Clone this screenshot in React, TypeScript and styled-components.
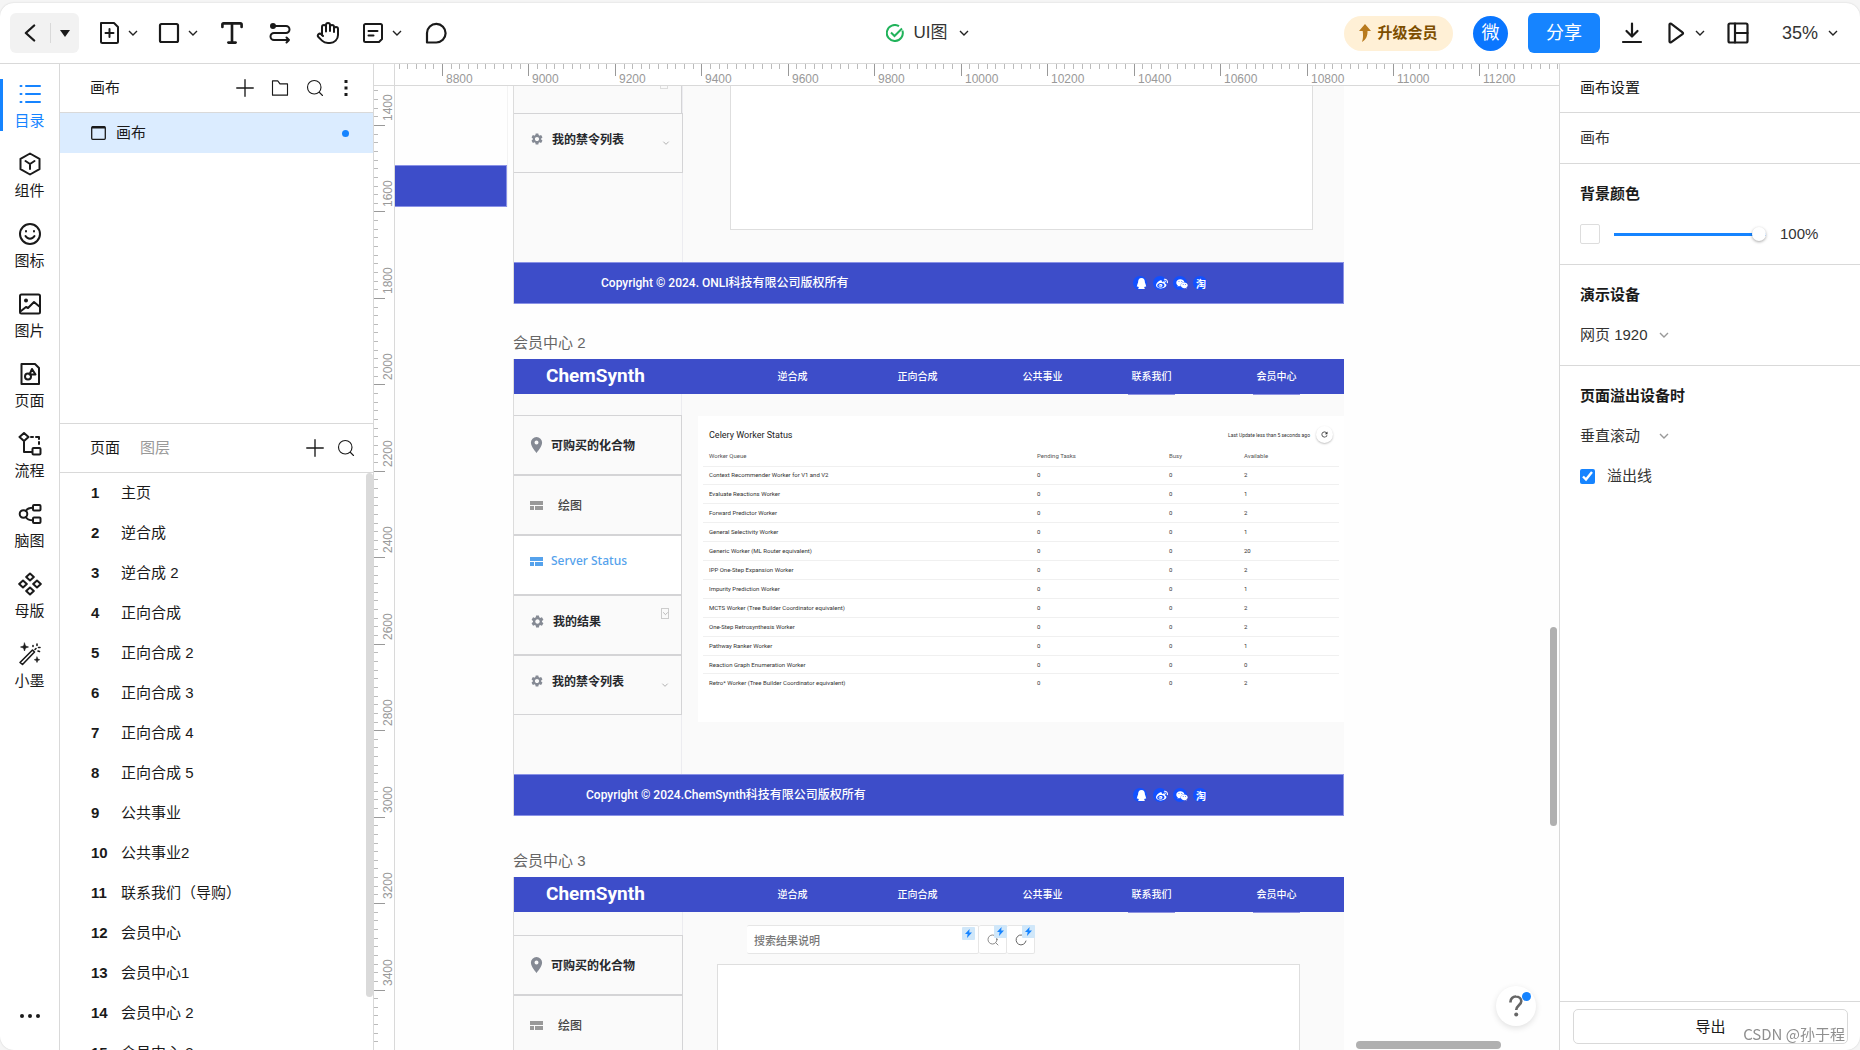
import React from 'react';
import styled, { createGlobalStyle, css } from 'styled-components';
import { Hand, Type } from 'lucide-react';
import { FaQq, FaWeibo, FaWeixin } from 'react-icons/fa';
import { MdSettings, MdRefresh } from 'react-icons/md';

const SANS = '"Liberation Sans", "Noto Sans CJK SC", sans-serif';
const BOARD_FONT = 'Roboto, "Noto Sans CJK SC", sans-serif';
const LINE = '#d9d9d9';
const INK = '#1a1a1a';
const BLUE = '#1684ff';
const INDIGO = '#3d4dc9';

const GlobalStyle = createGlobalStyle`
  * { box-sizing: border-box; }
  body { margin: 0; background: #f5f5f5; color: ${INK}; font: 15px/20px ${SANS}; overflow: hidden; }
  button, input, select { font: inherit; color: inherit; }
  button { padding: 0; border: 0; background: none; cursor: pointer; }
  svg { display: block; flex: none; }
`;

/* ---------- shell ---------- */

const Page = styled.div`
  height: 100vh;
  padding-top: 3px;
  display: flex;
`;
const Shell = styled.div`
  flex: 1;
  min-width: 0;
  display: flex;
  flex-direction: column;
  background: #fff;
  border-radius: 14px;
  overflow: hidden;
  box-shadow: 0 0 2px rgba(0, 0, 0, 0.16);
`;
const Workspace = styled.div`
  flex: 1;
  min-height: 0;
  display: flex;
`;

/* ---------- toolbar ---------- */

const Toolbar = styled.header`
  flex: none;
  height: 61px;
  padding: 0 21px 0 10px;
  display: grid;
  grid-template-columns: 1fr auto 1fr;
  align-items: center;
  border-bottom: 1px solid ${LINE};
`;
const ToolGroup = styled.div<{ $end?: boolean }>`
  display: flex;
  align-items: center;
  gap: ${(p) => (p.$end ? 20 : 18)}px;
  justify-content: ${(p) => (p.$end ? 'flex-end' : 'flex-start')};
`;
const BackBox = styled.div`
  display: flex;
  align-items: center;
  width: 69px;
  height: 40px;
  border-radius: 6px;
  background: #f2f2f2;
`;
const BackButton = styled.button`
  width: 41px;
  height: 20px;
  display: grid;
  place-items: center;
  border-right: 1px solid ${LINE};
`;
const MoreButton = styled.button`
  flex: 1;
  height: 20px;
  display: grid;
  place-items: center;
`;
const Tool = styled.button<{ $plain?: boolean }>`
  display: flex;
  align-items: center;
  gap: 6px;
  height: 40px;
  padding: 0 ${(p) => (p.$plain ? 3 : 0)}px;
`;
const TitleButton = styled.button`
  display: flex;
  align-items: center;
  gap: 10px;
  padding-left: 6px;
  font-size: 17px;
  color: #333;
`;
const UpgradeButton = styled.button`
  display: flex;
  align-items: center;
  justify-content: center;
  gap: 6px;
  width: 109px;
  height: 35px;
  border-radius: 18px;
  background: #fff0d6;
  color: #7d4e00;
  font-weight: 700;
`;
const Avatar = styled.button`
  width: 35px;
  height: 35px;
  border-radius: 50%;
  background: #0a76ff;
  color: #fff;
  font-size: 18px;
`;
const ShareButton = styled.button`
  width: 72px;
  height: 40px;
  border-radius: 6px;
  background: ${BLUE};
  color: #fff;
  font-size: 18px;
`;

/* ---------- selects ---------- */

const SelectWrap = styled.span<{ $gap?: number }>`
  display: inline-flex;
  align-items: center;
  gap: ${(p) => p.$gap ?? 10}px;
`;
const Select = styled.select<{ $size?: number }>`
  appearance: none;
  field-sizing: content;
  border: 0;
  padding: 0;
  background: none;
  font-size: ${(p) => p.$size ?? 15}px;
  line-height: 20px;
  color: #333;
`;
const ZoomSlot = styled.span`
  padding-left: 12px;
`;

/* ---------- left rail ---------- */

const Rail = styled.nav`
  flex: none;
  width: 60px;
  padding: 15px 0 20px;
  display: flex;
  flex-direction: column;
  border-right: 1px solid ${LINE};
`;
const RailButton = styled.button<{ $active?: boolean }>`
  flex: none;
  height: 52px;
  margin-bottom: 18px;
  display: flex;
  flex-direction: column;
  align-items: center;
  justify-content: space-between;
  padding-top: 3px;
  border-left: 3px solid ${(p) => (p.$active ? BLUE : 'transparent')};
  border-right: 3px solid transparent;
  color: ${(p) => (p.$active ? BLUE : INK)};
`;
const RailMore = styled.button`
  margin-top: auto;
  height: 28px;
  display: grid;
  place-items: center;
`;

/* ---------- left panel ---------- */

const LeftPanel = styled.aside`
  flex: none;
  width: 314px;
  display: flex;
  flex-direction: column;
  border-right: 1px solid ${LINE};
`;
const PanelHead = styled.div<{ $ruled?: boolean }>`
  flex: none;
  height: 49px;
  padding: 0 18px 0 30px;
  display: flex;
  align-items: center;
  gap: 20px;
  border-bottom: 1px solid ${LINE};
  ${(p) => p.$ruled && css`border-top: 1px solid ${LINE}; height: 50px;`}
`;
const HeadTools = styled.div<{ $menu?: boolean }>`
  margin-left: auto;
  display: flex;
  gap: ${(p) => (p.$menu ? 17 : 13)}px;
  button { width: 18px; height: 20px; display: grid; place-items: center; }
  ${(p) => p.$menu && css`button:last-child { width: 10px; margin-right: 4px; }`}
`;
const Tab = styled.button<{ $muted?: boolean }>`
  color: ${(p) => (p.$muted ? '#999' : INK)};
`;
const CanvasRow = styled.button`
  flex: none;
  height: 40px;
  padding: 0 24px 0 31px;
  display: flex;
  align-items: center;
  gap: 10px;
  background: #dbecff;
`;
const Dot = styled.i`
  margin-left: auto;
  width: 7px;
  height: 7px;
  border-radius: 50%;
  background: ${BLUE};
`;
const CanvasList = styled.div`
  flex: none;
  height: 359px;
  display: flex;
  flex-direction: column;
`;
const PageArea = styled.div`
  flex: 1;
  min-height: 0;
  display: flex;
  overflow: hidden;
`;
const PageList = styled.ol`
  flex: 1;
  margin: 0;
  padding: 0;
  list-style: none;
`;
const PageItem = styled.li`
  height: 40px;
  padding-left: 31px;
  display: flex;
  align-items: center;
  b { width: 30px; }
`;
const ListThumb = styled.div`
  width: 7px;
  height: 524px;
  border-radius: 4px;
  background: #dadada;
`;

/* ---------- canvas ---------- */

const Stage = styled.main`
  flex: 1;
  min-width: 0;
  display: grid;
  grid-template: 22px minmax(0, 1fr) / 21px minmax(0, 1fr);
`;
const Ruler = styled.div<{ $side?: boolean }>`
  overflow: hidden;
  background: #fff;
  border-bottom: ${(p) => (p.$side ? 0 : 1)}px solid ${LINE};
  border-right: ${(p) => (p.$side ? 1 : 0)}px solid ${LINE};
  svg { width: 100%; height: 100%; }
  text { font: 12px ${SANS}; fill: #999; }
`;
const Corner = styled.div`
  border-right: 1px solid ${LINE};
  border-bottom: 1px solid ${LINE};
`;
const Viewport = styled.div`
  position: relative;
  overflow: hidden;
  background: #fefefe;
`;
const Board = styled.section<{ $x: number; $y: number; $w?: number }>`
  position: absolute;
  left: ${(p) => p.$x}px;
  top: ${(p) => p.$y}px;
  width: ${(p) => p.$w ?? 831}px;
  font-family: ${BOARD_FONT};
`;
const BoardName = styled.h2`
  margin: 0 0 5px;
  font: 400 15px/22px ${SANS};
  color: #666;
`;
const Frame = styled.div<{ $h: number }>`
  height: ${(p) => p.$h}px;
  display: flex;
  flex-direction: column;
  background: #fafafa;
  border-left: 1px solid #dcdcdc;
`;
const EdgeFrame = styled.div`
  height: 121px;
  display: flex;
  flex-direction: column;
  justify-content: flex-end;
  border-right: 1px solid #f3f3f3;
`;
const BoardBody = styled.div`
  flex: 1;
  min-height: 0;
  display: flex;
`;
const BoardHeader = styled.div`
  flex: none;
  height: 35px;
  display: grid;
  grid-template-columns: 255px 125px 125px 109px 125px 1fr;
  background: ${INDIGO};
  color: #fff;
`;
const Brand = styled.strong`
  padding-left: 32px;
  font-size: 19px;
  line-height: 34px;
`;
const NavLink = styled.a<{ $line?: boolean }>`
  width: 47px;
  height: 36px;
  text-align: center;
  font-size: 10px;
  line-height: 35px;
  font-weight: 500;
  color: #fff;
  text-decoration: none;
  border-bottom: 1px solid ${(p) => (p.$line ? '#8e93e0' : 'transparent')};
`;
const FooterBar = styled.div`
  flex: none;
  height: 42px;
  background: ${INDIGO};
  border: 1px solid #8a92e6;
  border-left-width: 0;
`;
const BoardFooter = styled(FooterBar)<{ $indent: number }>`
  padding: 0 136px 0 ${(p) => p.$indent}px;
  display: flex;
  align-items: center;
  justify-content: space-between;
  color: #fff;
  font-size: 12px;
  font-weight: 500;
`;
const Socials = styled.div`
  display: flex;
  gap: 6px;
`;
const Social = styled.span`
  width: 14px;
  height: 14px;
  padding: 2px 0 0 3px;
  border-radius: 50%;
  background: #1150ff;
  font-size: 10px;
  line-height: 13px;
  font-weight: 700;
`;
const Side = styled.div<{ $top: number; $w: number }>`
  flex: none;
  width: ${(p) => p.$w}px;
  padding-top: ${(p) => p.$top}px;
  border-right: 1px solid #ececf0;
`;
const SideItem = styled.div<{ $active?: boolean; $raised?: boolean; $gap?: number }>`
  height: 60px;
  margin-right: -1px;
  padding: 0 12px ${(p) => (p.$raised ? 8 : 0)}px 16px;
  display: flex;
  align-items: center;
  gap: ${(p) => p.$gap ?? 8}px;
  border: solid #d4d4d6;
  border-width: 1px 1px 1px 0;
  background: ${(p) => (p.$active ? '#fff' : '#fafafa')};
  font-size: 12px;
  font-weight: ${(p) => (p.$active || p.$gap ? 500 : 700)};
  font-family: ${(p) => (p.$active ? '"Noto Sans"' : '"Noto Sans CJK SC"')}, sans-serif;
  color: ${(p) => (p.$active ? '#55a2ec' : p.$gap ? '#444' : '#26282c')};
  > svg:first-child { color: ${(p) => (p.$active ? '#55a2ec' : p.$gap ? '#999' : '#858a94')}; }
`;
const SideStub = styled.div`
  height: 27px;
  padding-right: 13px;
  display: flex;
  justify-content: flex-end;
  border-right: 1px solid #d4d4d6;
`;
const StubBox = styled.i`
  width: 8px;
  height: 3px;
  border: 1px solid #ddd;
  border-top: 0;
`;
const Toggle = styled.span<{ $boxed?: boolean }>`
  margin-left: auto;
  width: 8px;
  height: 11px;
  display: grid;
  place-items: center;
  align-self: ${(p) => (p.$boxed ? 'flex-start' : 'flex-end')};
  margin-top: ${(p) => (p.$boxed ? 12 : 0)}px;
  margin-bottom: ${(p) => (p.$boxed ? 0 : 16)}px;
  border: ${(p) => (p.$boxed ? '1px solid #ccc' : '0')};
`;
const BlankSheet = styled.div<{ $x: number; $top?: number; $bottom?: number; $open?: boolean }>`
  flex: 1;
  margin: ${(p) => p.$top ?? 0}px ${(p) => 78 - p.$x}px ${(p) => p.$bottom ?? 0}px ${(p) => p.$x}px;
  background: #fff;
  border: 1px solid #dedede;
  ${(p) => p.$open && css`border-top: 0;`}
`;

const Card = styled.div`
  flex: 1;
  height: 306px;
  margin: 22px 0 0 16px;
  padding-top: 10px;
  background: #fff;
`;
const CardHead = styled.div`
  height: 17px;
  padding: 0 11px;
  display: flex;
  align-items: center;
  gap: 6px;
  font-size: 5px;
  color: #333;
  h3 { margin: 0 auto 0 0; font-size: 9px; font-weight: 400; color: #222; }
`;
const RefreshButton = styled.button`
  width: 17px;
  height: 17px;
  display: grid;
  place-items: center;
  border-radius: 50%;
  background: #fff;
  box-shadow: 0 1px 2px rgba(0, 0, 0, 0.25);
`;
const StatusTable = styled.table`
  width: calc(100% - 10px);
  height: 246px;
  margin: 3px 5px 0 5px;
  border-collapse: collapse;
  table-layout: fixed;
  font-size: 6px;
  line-height: 8px;
  color: #333;
  th, td { padding: 0 6px; text-align: left; font-weight: 400; }
  th { height: 20px; color: #555; }
  td { border-top: 1px solid #f0f0f0; }
`;

const SearchColumn = styled.div`
  flex: 1;
  display: flex;
  flex-direction: column;
`;
const SearchBar = styled.div`
  height: 29px;
  margin: 13px 0 0 64px;
  display: flex;
`;
const SearchCell = styled.div<{ $w: number }>`
  position: relative;
  width: ${(p) => p.$w}px;
  display: flex;
  background: #fff;
  border: solid #e6e6e6;
  border-width: 1px 1px 1px 0;
  border-radius: 2px;
  input { width: 100%; border: 0; padding: 4px 7px 0; background: none; font: 500 11px ${BOARD_FONT}; }
  input::placeholder { color: #777; }
  button { flex: 1; display: grid; place-items: center; color: #666; }
`;
const BoltBadge = styled.span<{ $inset?: boolean }>`
  position: absolute;
  right: ${(p) => (p.$inset ? 3 : -1)}px;
  top: ${(p) => (p.$inset ? 1 : -1)}px;
  width: 13px;
  height: 13px;
  display: grid;
  place-items: center;
  border-radius: 1px;
  background: #d0e7f9;
`;

const VThumb = styled.div`
  position: absolute;
  right: 2px;
  top: 541px;
  width: 7px;
  height: 199px;
  border-radius: 4px;
  background: #b0b0b0;
`;
const HThumb = styled.div`
  position: absolute;
  right: 58px;
  bottom: 1px;
  width: 145px;
  height: 8px;
  border-radius: 4px;
  background: #b0b0b0;
`;
const HelpButton = styled.button`
  position: absolute;
  right: 23px;
  bottom: 24px;
  width: 40px;
  height: 40px;
  display: grid;
  place-items: center;
  border-radius: 50%;
  background: #fff;
  box-shadow: 0 2px 6px rgba(0, 0, 0, 0.12);
`;
const HelpDot = styled.i`
  position: absolute;
  right: 5px;
  top: 6px;
  width: 9px;
  height: 9px;
  border-radius: 50%;
  background: ${BLUE};
`;

/* ---------- right panel ---------- */

const RightPanel = styled.aside`
  flex: none;
  width: 301px;
  display: flex;
  flex-direction: column;
  border-left: 1px solid ${LINE};
`;
const Section = styled.section<{ $pad?: number; $last?: boolean }>`
  padding: ${(p) => p.$pad ?? 20}px 20px;
  display: flex;
  flex-direction: column;
  align-items: flex-start;
  gap: 20px;
  border-bottom: ${(p) => (p.$last ? 0 : 1)}px solid ${LINE};
  h3 { margin: 0; font-size: 15px; font-weight: 700; line-height: 20px; }
`;
const NameInput = styled.input`
  width: 100%;
  height: 20px;
  padding: 0;
  border: 0;
  background: none;
  color: #333;
`;
const Row = styled.div`
  display: flex;
  align-items: center;
  height: 20px;
  gap: 14px;
  color: #333;
`;
const Swatch = styled.button`
  width: 20px;
  height: 20px;
  border: 1px solid #ddd;
  border-radius: 2px;
  background: #fff;
`;
const Slider = styled.input`
  appearance: none;
  width: 152px;
  height: 14px;
  margin: 0;
  background: linear-gradient(${BLUE}, ${BLUE}) center / 100% 3px no-repeat;
  &::-webkit-slider-thumb {
    appearance: none;
    width: 14px;
    height: 14px;
    border-radius: 50%;
    background: #fff;
    box-shadow: 0 1px 3px rgba(0, 0, 0, 0.35);
  }
`;
const CheckLabel = styled.label`
  display: flex;
  align-items: center;
  gap: 12px;
  color: #333;
  input { width: 15px; height: 15px; margin: 0; accent-color: ${BLUE}; }
`;
const ExportBar = styled.div`
  margin-top: auto;
  padding: 7px 12px 6px 13px;
  border-top: 1px solid ${LINE};
`;
const ExportButton = styled.button`
  width: 100%;
  height: 35px;
  border: 1px solid ${LINE};
  border-radius: 5px;
`;
const Watermark = styled.span`
  position: fixed;
  right: 15px;
  bottom: 6px;
  font: 15px/20px "Noto Sans CJK SC", sans-serif;
  color: #8f8f8f;
  pointer-events: none;
`;

/* ---------- icons ---------- */

const Icon = ({ size = 24, w = 2, children }: { size?: number; w?: number; children: React.ReactNode }) => (
  <svg width={size} height={size} viewBox="0 0 24 24" fill="none" stroke="currentColor" strokeWidth={w} strokeLinecap="round" strokeLinejoin="round" aria-hidden="true">
    {children}
  </svg>
);
const Chevron = ({ size = 12, color = '#222' }: { size?: number; color?: string }) => (
  <svg width={size} height={size} viewBox="0 0 12 12" fill="none" stroke={color} strokeWidth="1.4" aria-hidden="true">
    <path d="M2 4l4 4 4-4" />
  </svg>
);
const SearchIcon = ({ size = 18, w = 1.5 }: { size?: number; w?: number }) => (
  <Icon size={size} w={w}><circle cx="11" cy="11" r="9" /><path d="M18 18l4 4" /></Icon>
);
const PlusIcon = () => <Icon size={18} w={1.8}><path d="M12 1v22M1 12h22" /></Icon>;
const Blocks = () => (
  <svg width="13" height="12" viewBox="0 0 13 12" fill="currentColor" aria-hidden="true">
    <path d="M0 2h13v4H0zM0 7h4v4H0zM5 7h8v4H5z" />
  </svg>
);
const Pin = () => (
  <svg width="13" height="16" viewBox="0 0 13 16" fill="currentColor" fillRule="evenodd" aria-hidden="true">
    <path d="M6.500 0A5.600 5.600 0 0 1 12.100 5.600C12.100 9.800 6.500 16 6.500 16S.9 9.800.9 5.600A5.600 5.600 0 0 1 6.500 0zM6.500 3.600a2 2 0 1 0 0 4 2 2 0 0 0 0-4z" />
  </svg>
);
const Bolt = () => (
  <svg width="7" height="9" viewBox="0 0 7 9" fill={BLUE} aria-hidden="true"><path d="M4.6 0L0 5h2.6L2 9l5-5.4H4.2z" /></svg>
);

const railItems: { label: string; icon: React.ReactNode }[] = [
  { label: '目录', icon: <Icon size={24}><path d="M8 4h14M8 12h14M8 20h14M2.500 4h1M2.500 12h1M2.500 20h1" /></Icon> },
  { label: '组件', icon: <Icon><path d="M12 1.500l9.500 5.300v10.400L12 22.500l-9.500-5.300V6.800zM7.500 9l4.500 3 4.500-3M12 12v5" /></Icon> },
  { label: '图标', icon: <Icon><circle cx="12" cy="12" r="10" /><path d="M8 9v.5M16 9v.5M7.500 14c2 3.500 7 3.500 9 0" /></Icon> },
  { label: '图片', icon: <Icon><rect x="2" y="2.500" width="20" height="19" rx="1.500" /><circle cx="8" cy="8.500" r="1" fill="currentColor" /><path d="M3 19l5-4 2 1 6-6 6 5" /></Icon> },
  { label: '页面', icon: <Icon><path d="M3.500 2H17l4 4v16H3.500z" /><circle cx="10" cy="14.500" r="3" /><path d="M14 7l3.500 5.500h-6z" /></Icon> },
  { label: '流程', icon: <Icon><path d="M6 1l4.500 4L6 9 1.500 5zM6 9v11h8M13 5h2M18 5h3v2M21 10v2" /><rect x="14.500" y="16" width="8" height="6.500" rx="1" /></Icon> },
  { label: '脑图', icon: <Icon><circle cx="5.500" cy="12" r="3.800" /><rect x="15" y="3" width="7.500" height="5.500" rx="1" /><rect x="15" y="15.500" width="7.500" height="5.500" rx="1" /><path d="M8 9c1-2.500 3-3.300 7-3.300M8 15c1 2.500 3 3.300 7 3.300" /></Icon> },
  { label: '母版', icon: <Icon><path d="M12 1.500l3.800 3.500L12 8.500 8.200 5zM12 15.500l3.800 3.500-3.800 3.500L8.200 19zM5 8.500L8.800 12 5 15.500 1.200 12zM19 8.500l3.800 3.500-3.800 3.500-3.800-3.500z" /></Icon> },
  { label: '小墨', icon: <Icon w={1.6}><path d="M2 20.500L14.500 8l2 2L4.500 22.500zM15 3.500v1M19 2v1.500M22 5.500h-1.500M21.500 9.500l-1.500-.5M18 6.500l-1 1" /><path d="M6.500 1l1 3 3 1-3 1-1 3-1-3-3-1 3-1zM19 15l.7 2 2 .7-2 .8-.7 2-.7-2-2-.8 2-.7z" fill="currentColor" strokeWidth=".6" /></Icon> },
];

const pages = ['主页', '逆合成', '逆合成 2', '正向合成', '正向合成 2', '正向合成 3', '正向合成 4', '正向合成 5', '公共事业', '公共事业2', '联系我们（导购）', '会员中心', '会员中心1', '会员中心 2', '会员中心 3'];

const workers: [string, number][] = [
  ['Context Recommender Worker for V1 and V2', 2],
  ['Evaluate Reactions Worker', 1],
  ['Forward Predictor Worker', 2],
  ['General Selectivity Worker', 1],
  ['Generic Worker (ML Router equivalent)', 20],
  ['IPP One-Step Expansion Worker', 2],
  ['Impurity Prediction Worker', 1],
  ['MCTS Worker (Tree Builder Coordinator equivalent)', 2],
  ['One-Step Retrosynthesis Worker', 2],
  ['Pathway Ranker Worker', 1],
  ['Reaction Graph Enumeration Worker', 0],
  ['Retro* Worker (Tree Builder Coordinator equivalent)', 2],
];

/* Distance on screen between two labelled ruler marks (200 canvas units). */
const MARK = 86.45;

function Scale({ side, first, start, count }: { side?: boolean; first: number; start: number; count: number }) {
  const ticks = Array.from({ length: count }, (_, i) => i - 5);
  return (
    <svg aria-hidden="true">
      {ticks.map((i) => {
        const at = Math.round(start + (i * MARK) / 10);
        const major = i % 10 === 0;
        const len = major ? 12 : 5;
        return (
          <React.Fragment key={i}>
            <rect x={side ? 0 : at} y={side ? at : 0} width={side ? len - 1 : 1} height={side ? 1 : len} fill={major ? '#999' : '#bbb'} />
            {major && (side
              ? <text transform={`translate(18 ${at - 4}) rotate(-90)`}>{first + i * 20}</text>
              : <text x={at + 4} y={19}>{first + i * 20}</text>)}
          </React.Fragment>
        );
      })}
    </svg>
  );
}

function Header() {
  return (
    <BoardHeader>
      <Brand>ChemSynth</Brand>
      <NavLink href="#retro">逆合成</NavLink>
      <NavLink href="#forward">正向合成</NavLink>
      <NavLink href="#public">公共事业</NavLink>
      <NavLink href="#contact" $line>联系我们</NavLink>
      <NavLink href="#member" $line>会员中心</NavLink>
    </BoardHeader>
  );
}

function Footer({ text, indent }: { text: string; indent: number }) {
  return (
    <BoardFooter $indent={indent}>
      <span>{text}</span>
      <Socials>
        <Social><FaQq size={11} /></Social>
        <Social><FaWeibo size={12} /></Social>
        <Social><FaWeixin size={12} /></Social>
        <Social>淘</Social>
      </Socials>
    </BoardFooter>
  );
}

const BanItem = () => (
  <SideItem $raised>
    <MdSettings size={14} />我的禁令列表<Toggle><Chevron size={8} color="#aaa" /></Toggle>
  </SideItem>
);

function Boards() {
  return (
    <>
      <Board $x={0} $y={0} $w={113}>
        <EdgeFrame><FooterBar /></EdgeFrame>
      </Board>

      <Board $x={118} $y={0}>
        <Frame $h={218}>
          <BoardBody>
            <Side $top={0} $w={169}>
              <SideStub><StubBox /></SideStub>
              <BanItem />
            </Side>
            <BlankSheet $x={47} $bottom={32} $open />
          </BoardBody>
          <Footer text="Copyright © 2024. ONLI科技有限公司版权所有" indent={87} />
        </Frame>
      </Board>

      <Board $x={118} $y={246}>
        <BoardName>会员中心 2</BoardName>
        <Frame $h={457}>
          <Header />
          <BoardBody>
            <Side $top={21} $w={168}>
              <SideItem><Pin />可购买的化合物</SideItem>
              <SideItem $gap={15}><Blocks />绘图</SideItem>
              <SideItem $active $raised><Blocks />Server Status</SideItem>
              <SideItem $raised><MdSettings size={15} />我的结果<Toggle $boxed><Chevron size={7} color="#aaa" /></Toggle></SideItem>
              <BanItem />
            </Side>
            <Card>
              <CardHead>
                <h3>Celery Worker Status</h3>
                <span>Last Update less than 5 seconds ago</span>
                <RefreshButton aria-label="Refresh"><MdRefresh size={9} /></RefreshButton>
              </CardHead>
              <StatusTable>
                <colgroup><col width="328" /><col width="132" /><col width="75" /><col /></colgroup>
                <thead>
                  <tr><th>Worker Queue</th><th>Pending Tasks</th><th>Busy</th><th>Available</th></tr>
                </thead>
                <tbody>
                  {workers.map(([name, free]) => (
                    <tr key={name}><td>{name}</td><td>0</td><td>0</td><td>{free}</td></tr>
                  ))}
                </tbody>
              </StatusTable>
            </Card>
          </BoardBody>
          <Footer text="Copyright © 2024.ChemSynth科技有限公司版权所有" indent={72} />
        </Frame>
      </Board>

      <Board $x={118} $y={764}>
        <BoardName>会员中心 3</BoardName>
        <Frame $h={457}>
          <Header />
          <BoardBody>
            <Side $top={23} $w={169}>
              <SideItem><Pin />可购买的化合物</SideItem>
              <SideItem $gap={15}><Blocks />绘图</SideItem>
            </Side>
            <SearchColumn>
              <SearchBar>
                <SearchCell $w={232}>
                  <input aria-label="搜索结果说明" placeholder="搜索结果说明" />
                  <BoltBadge $inset><Bolt /></BoltBadge>
                </SearchCell>
                <SearchCell $w={28}>
                  <button aria-label="搜索"><SearchIcon size={12} /></button>
                  <BoltBadge><Bolt /></BoltBadge>
                </SearchCell>
                <SearchCell $w={28}>
                  <button aria-label="刷新"><Icon size={12}><path d="M21 7a10 10 0 1 0 1 7" /></Icon></button>
                  <BoltBadge><Bolt /></BoltBadge>
                </SearchCell>
              </SearchBar>
              <BlankSheet $x={34} $top={10} />
            </SearchColumn>
          </BoardBody>
        </Frame>
      </Board>
    </>
  );
}

export default function App() {
  return (
    <Page>
      <GlobalStyle />
      <Shell>
        <Toolbar>
          <ToolGroup>
            <BackBox>
              <BackButton aria-label="返回"><Icon size={20} w={2.8}><path d="M17 3l-10 9 10 9" /></Icon></BackButton>
              <MoreButton aria-label="更多"><svg width="10" height="7" viewBox="0 0 10 7"><path d="M0 0h10L5 7z" fill={INK} /></svg></MoreButton>
            </BackBox>
            <Tool aria-label="新建页面"><Icon><path d="M4 2h13l4 4v14.500a1.500 1.500 0 0 1-1.500 1.500h-14A1.500 1.500 0 0 1 4 20.500zM12.500 8v8M8.500 12h8" /></Icon><Chevron /></Tool>
            <Tool aria-label="形状"><Icon w={2.2}><rect x="3" y="3" width="18" height="18" rx="1.500" /></Icon><Chevron /></Tool>
            <Tool $plain aria-label="文字"><Type size={24} strokeWidth={2.2} viewBox="2 2 20 20" /></Tool>
            <Tool $plain aria-label="连线"><Icon><circle cx="5" cy="5" r="2" fill="currentColor" /><path d="M6 5h12a3.500 3.500 0 0 1 0 7H6a3.500 3.500 0 0 0 0 7h15M18.500 16.500L21 19l-2.500 2.500" /></Icon></Tool>
            <Tool $plain aria-label="移动画布"><Hand size={24} strokeWidth={2} /></Tool>
            <Tool aria-label="便签"><Icon><path d="M4.500 3h15A1.500 1.500 0 0 1 21 4.500V18l-3 3H4.500A1.500 1.500 0 0 1 3 19.500v-15A1.500 1.500 0 0 1 4.500 3zM7.500 10h9M7.500 14.500h5" /></Icon><Chevron /></Tool>
            <Tool $plain aria-label="评论"><Icon w={2.200}><path d="M3 21.500V12a9.300 9.300 0 1 1 9.300 9.500z" /></Icon></Tool>
          </ToolGroup>
          <TitleButton>
            <svg width="18" height="18" viewBox="0 0 18 18" fill="none" stroke="#21b35b" strokeWidth="2">
              <path d="M16.400 6.500A8 8 0 1 1 13 2.200" /><path d="M5 8.500l3.500 3.500L16 4.500" />
            </svg>
            UI图
            <Chevron />
          </TitleButton>
          <ToolGroup $end>
            <UpgradeButton>
              <svg width="12" height="18" viewBox="0 0 12 18" fill="#b87a1e"><path d="M6 0l6 7H8.500c.2 5-1.500 8.500-5.500 11C4.300 14.500 4.200 11 3.700 7H0z" /></svg>
              升级会员
            </UpgradeButton>
            <Avatar>微</Avatar>
            <ShareButton>分享</ShareButton>
            <Tool aria-label="下载"><Icon w={2.200}><path d="M12 2.500V15M6.500 10l5.500 5.500 5.500-5.500M3 21h18" /></Icon></Tool>
            <Tool aria-label="演示"><Icon w={2.200}><path d="M5.500 3.500v17c0 .8.800 1.200 1.500.8l11.500-8.100c.7-.5.7-1.300 0-1.800L7 2.700c-.7-.5-1.500 0-1.500.8z" /></Icon><Chevron /></Tool>
            <Tool aria-label="布局"><Icon w={2.200}><rect x="2.500" y="2.500" width="19" height="19" rx="1.500" /><path d="M9 2.500v19M9 12h12.500" /></Icon></Tool>
            <ZoomSlot>
              <SelectWrap $gap={9}>
                <Select $size={18} aria-label="缩放" defaultValue="35%"><option>35%</option></Select>
                <Chevron />
              </SelectWrap>
            </ZoomSlot>
          </ToolGroup>
        </Toolbar>

        <Workspace>
          <Rail>
            {railItems.map((item, i) => (
              <RailButton key={item.label} $active={i === 0}>{item.icon}{item.label}</RailButton>
            ))}
            <RailMore aria-label="更多工具">
              <svg width="20" height="4" viewBox="0 0 20 4" fill={INK}><circle cx="2" cy="2" r="2" /><circle cx="10" cy="2" r="2" /><circle cx="18" cy="2" r="2" /></svg>
            </RailMore>
          </Rail>

          <LeftPanel>
            <CanvasList>
              <PanelHead>
                <span>画布</span>
                <HeadTools $menu>
                  <button aria-label="新建画布"><PlusIcon /></button>
                  <button aria-label="新建文件夹"><Icon size={18} w={1.500}><path d="M2 2.500h7l3 4h10v15H2z" /></Icon></button>
                  <button aria-label="搜索画布"><SearchIcon /></button>
                  <button aria-label="画布菜单"><svg width="4" height="16" viewBox="0 0 4 16" fill={INK}><path d="M.5 0h3v3h-3zM.5 6.500h3v3h-3zM.5 13h3v3h-3z" /></svg></button>
                </HeadTools>
              </PanelHead>
              <CanvasRow>
                <svg width="15" height="14" viewBox="0 0 15 14" fill="none" stroke={INK}><rect x=".7" y=".7" width="13.600" height="12.600" rx="1" strokeWidth="1.300" /><path d="M1 1.500h13" strokeWidth="2" /></svg>
                画布
                <Dot />
              </CanvasRow>
            </CanvasList>
            <PanelHead $ruled>
              <Tab>页面</Tab>
              <Tab $muted>图层</Tab>
              <HeadTools>
                <button aria-label="新建"><PlusIcon /></button>
                <button aria-label="搜索页面"><SearchIcon /></button>
              </HeadTools>
            </PanelHead>
            <PageArea>
              <PageList>
                {pages.map((name, i) => (
                  <PageItem key={name}><b>{i + 1}</b>{name}</PageItem>
                ))}
              </PageList>
              <ListThumb />
            </PageArea>
          </LeftPanel>

          <Stage>
            <Corner />
            <Ruler><Scale first={8800} start={47} count={135} /></Ruler>
            <Ruler $side><Scale side first={1400} start={39} count={115} /></Ruler>
            <Viewport>
              <Boards />
              <VThumb />
              <HThumb />
              <HelpButton aria-label="帮助">
                <svg width="14" height="22" viewBox="0 0 14 22" fill="none" stroke="#666" strokeWidth="2.600"><path d="M1.500 7.500V6.800A5.200 5.200 0 0 1 7 1.500c3 0 5.300 2 5.300 4.800 0 3.700-5.100 4.400-5.100 8.700" /><circle cx="7.200" cy="19.500" r="2" fill="#666" stroke="none" /></svg>
                <HelpDot />
              </HelpButton>
            </Viewport>
          </Stage>

          <RightPanel>
            <Section $pad={14}>画布设置</Section>
            <Section $pad={15}><NameInput aria-label="画布名称" defaultValue="画布" /></Section>
            <Section>
              <h3>背景颜色</h3>
              <Row>
                <Swatch aria-label="选择颜色" />
                <Slider type="range" aria-label="不透明度" min={0} max={100} defaultValue={100} />
                <span>100%</span>
              </Row>
            </Section>
            <Section>
              <h3>演示设备</h3>
              <Row>
                <SelectWrap>
                  <Select aria-label="演示设备" defaultValue="网页 1920"><option>网页 1920</option></Select>
                  <Chevron color="#999" />
                </SelectWrap>
              </Row>
            </Section>
            <Section $last>
              <h3>页面溢出设备时</h3>
              <Row>
                <SelectWrap $gap={18}>
                  <Select aria-label="溢出方式" defaultValue="垂直滚动"><option>垂直滚动</option></Select>
                  <Chevron color="#999" />
                </SelectWrap>
              </Row>
              <CheckLabel><input type="checkbox" defaultChecked />溢出线</CheckLabel>
            </Section>
            <ExportBar><ExportButton>导出</ExportButton></ExportBar>
          </RightPanel>
        </Workspace>
      </Shell>
      <Watermark>CSDN @孙于程</Watermark>
    </Page>
  );
}
